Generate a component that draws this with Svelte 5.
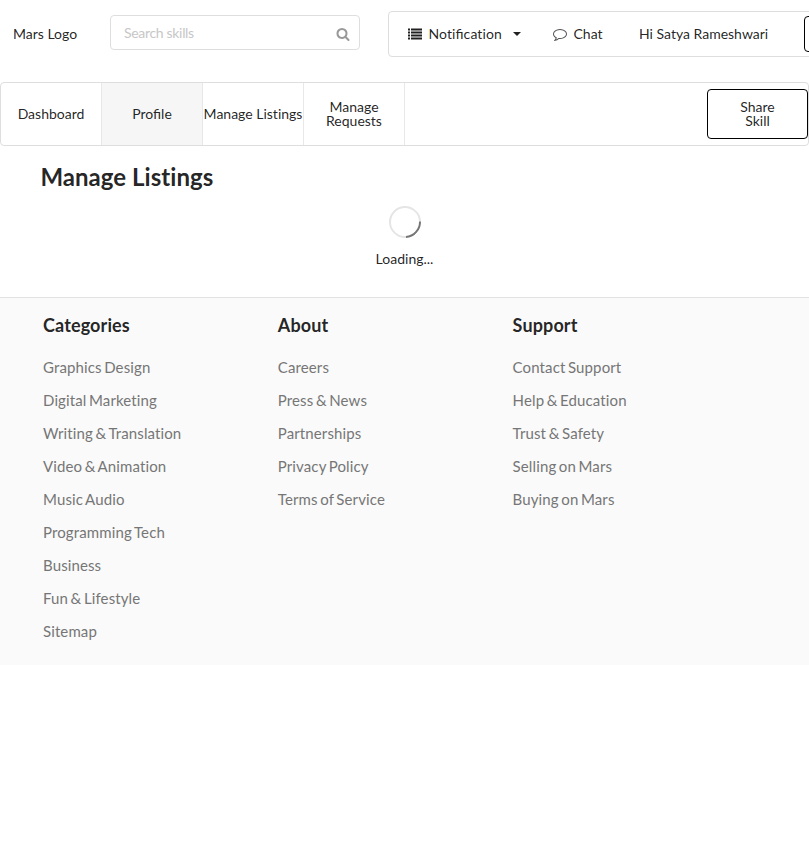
<script>
  const tabs = ['Dashboard', 'Profile', 'Manage Listings', 'Manage Requests'];
  const columns = [
    { title: 'Categories', links: ['Graphics Design', 'Digital Marketing', 'Writing & Translation', 'Video & Animation', 'Music Audio', 'Programming Tech', 'Business', 'Fun & Lifestyle', 'Sitemap'] },
    { title: 'About', links: ['Careers', 'Press & News', 'Partnerships', 'Privacy Policy', 'Terms of Service'] },
    { title: 'Support', links: ['Contact Support', 'Help & Education', 'Trust & Safety', 'Selling on Mars', 'Buying on Mars'] }
  ];
</script>

<div class="page">
  <header>
    <div class="logo">Mars Logo</div>
    <div class="search">
      <input type="text" placeholder="Search skills" />
      <svg class="glass" viewBox="0 0 1792 1792"><path d="M1216 832q0-185-131.5-316.5T768 384 451.5 515.5 320 832t131.5 316.5T768 1280t316.5-131.5T1216 832zm512 832q0 52-38 90t-90 38q-54 0-90-38l-343-342q-179 124-399 124-143 0-273.5-55.5t-225-150-150-225T64 832t55.5-273.5 150-225 225-150T768 128t273.5 55.5 225 150 150 225T1472 832q0 220-124 399l343 343q37 37 37 90z" /></svg>
    </div>
    <div class="menu">
      <div class="entry notification">
        <svg class="list" viewBox="0 0 14 12"><path d="M0 .5h2v2H0zM3 .5h11v2H3zM0 3.5h2v2H0zM3 3.5h11v2H3zM0 6.5h2v2H0zM3 6.5h11v2H3zM0 9.5h2v2H0zM3 9.5h11v2H3z" /></svg>
        <span class="label">Noti<span class="ligature">fi</span>cation</span>
        <svg class="caret" viewBox="0 0 8 4"><path d="M0 0h8L4 4z" /></svg>
      </div>
      <div class="entry chat">
        <svg class="bubble" viewBox="0 0 1792 1792"><path d="M896 384q-204 0-381.5 69.5T232.5 641 128 896q0 112 71.5 213.5T401 1285l87 50-27 96q-24 91-70 172 152-63 275-171l43-38 57 6q69 8 130 8 204 0 381.5-69.5t282-187.5 104.5-255-104.5-255-282-187.5T896 384zm896 512q0 174-120 321.5t-326 233-450 85.5q-70 0-145-8-198 175-460 242-49 14-114 22h-5q-15 0-27-10.5t-16-27.5v-1q-3-4-.5-12t2-10 4.5-9.5l6-9 7-8.5 8-9q7-8 31-34.5t34.5-38 31-39.5 32.5-51 27-59 26-76q-157-89-247.5-220T0 896q0-174 120-321.5t326-233T896 256t450 85.5 326 233T1792 896z" /></svg>
        <span>Chat</span>
      </div>
      <div class="entry user">Hi Satya Rameshwari</div>
      <button class="outlined account" aria-label="Account"></button>
    </div>
  </header>

  <nav>
    {#each tabs as tab}
      <a class:active={tab === 'Profile'} class:wrap={tab === 'Manage Requests'}>{tab}</a>
    {/each}
    <button class="outlined share">Share Skill</button>
  </nav>

  <main>
    <h2>Manage Listings</h2>
    <div class="loader">
      <div class="spinner"></div>
      <span>Loading...</span>
    </div>
  </main>

  <footer>
    {#each columns as column}
      <section>
        <h3>{column.title}</h3>
        <ul>
          {#each column.links as link}
            <li>{link}</li>
          {/each}
        </ul>
      </section>
    {/each}
  </footer>
</div>

<style>
  :global(body) {
    margin: 0;
    background: #fff;
    overflow: hidden;
  }
  .page, .page input, .page button {
    font-family: Lato, "Liberation Sans", sans-serif;
    font-size: 14px;
    color: rgba(0, 0, 0, 0.87);
  }
  .page {
    width: 100%;
    overflow: hidden;
    line-height: 20px;
    font-variant-ligatures: no-common-ligatures;
  }
  .page * { box-sizing: border-box; }
  svg { display: block; flex: none; fill: currentColor; }
  header {
    display: flex;
    height: 82px;
    padding-top: 11px;
  }
  .logo {
    flex: none;
    width: 110px;
    padding: 13px 0 0 13px;
  }
  .search {
    flex: none;
    display: flex;
    align-items: center;
    width: 250px;
    height: 35px;
    margin-top: 4px;
    padding: 0 9px 0 13px;
    border: 1px solid #dededf;
    border-radius: 4px;
  }
  .search input {
    flex: 1;
    min-width: 0;
    padding: 0;
    border: 0;
    outline: 0;
    height: 31px;
    letter-spacing: -0.32px;
  }
  .search input::placeholder { color: #c7c7c7; opacity: 1; }
  .glass { width: 14px; height: 14px; margin-top: 2px; color: #999; }
  .menu {
    flex: none;
    display: flex;
    align-items: center;
    width: 510px;
    height: 46px;
    margin-left: 28px;
    border: 1px solid #dededf;
    border-radius: 4px;
  }
  .entry {
    flex: none;
    display: flex;
    align-items: center;
    white-space: nowrap;
  }
  .notification { width: 164px; padding-left: 19px; }
  .list { width: 14px; height: 12px; margin-right: 6.5px; }
  .label { width: 84.5px; letter-spacing: 0.1px; }
  .ligature, nav a.active { font-variant-ligatures: normal; letter-spacing: 0; }
  .caret { width: 8px; height: 4px; }
  .chat { width: 86px; }
  .bubble { width: 14px; height: 14px; margin-right: 6.5px; color: #555; }
  .user { width: 165px; }
  .page .outlined {
    flex: none;
    background: #fff;
    border: 1px solid #000;
    border-radius: 4px;
    line-height: 14px;
  }
  .account { width: 90px; height: 36px; }
  nav {
    display: flex;
    align-items: center;
    height: 64px;
    border: 1px solid #dededf;
    border-radius: 4px;
  }
  nav a {
    flex: none;
    display: flex;
    align-items: center;
    justify-content: center;
    width: 101px;
    height: 62px;
    border-right: 1px solid #e8e8e8;
    line-height: 14px;
    text-align: center;
    white-space: nowrap;
  }
  nav a.wrap { white-space: normal; padding: 0 14px; }
  nav a.active { background: #f6f6f6; }
  .share {
    width: 101px;
    height: 50px;
    margin-left: auto;
    padding: 0 25px;
  }
  main {
    height: 151px;
    padding-top: 15px;
  }
  h2 {
    margin: 0 0 0 40.4px;
    font-size: 24px;
    line-height: 32px;
    font-weight: 700;
    letter-spacing: 0.04px;
  }
  .loader {
    display: flex;
    flex-direction: column;
    align-items: center;
    margin-top: 13px;
  }
  .spinner {
    width: 32px;
    height: 32px;
    margin-bottom: 11px;
    border: 2px solid #e5e5e5;
    border-bottom-color: #767676;
    border-radius: 50%;
    transform: rotate(-48deg);
  }
  footer {
    display: flex;
    height: 368px;
    padding: 15px 0 0 43px;
    border-top: 1px solid #e2e2e3;
    background: #fafafa;
  }
  section { width: 234.8px; flex: none; }
  h3 {
    margin: 0 0 14px;
    font-size: 18px;
    line-height: 24px;
    font-weight: 700;
    letter-spacing: 0.12px;
  }
  ul { margin: 0; padding: 0; list-style: none; }
  li {
    height: 33px;
    line-height: 33px;
    font-size: 15px;
    letter-spacing: 0.12px;
    word-spacing: -1.4px;
    color: #767676;
    white-space: nowrap;
  }
</style>
